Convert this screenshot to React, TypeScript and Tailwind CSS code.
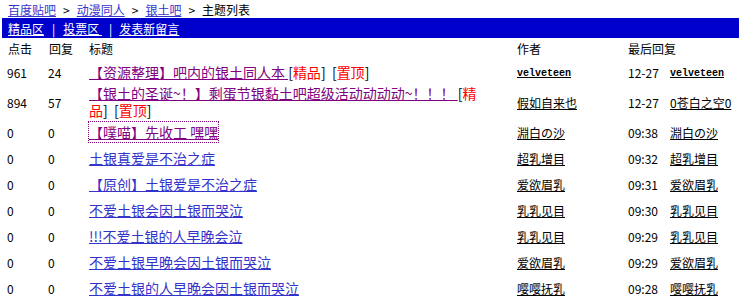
import React from "react";

type Row = {
  clicks: string;
  replies: string;
  title: React.ReactNode;
  author: string;
  time: string;
  last: string;
  latinAuthor?: boolean;
};

const Tag = ({ t }: { t: string }) => (
  <>
    <span className="text-black">[</span>
    <a className="text-[#ff0000] no-underline">{t}</a>
    <span className="text-black">]</span>
  </>
);

const rows: Row[] = [
  {
    clicks: "961",
    replies: "24",
    title: (
      <>
        <a className="text-[#800080] underline">【资源整理】吧内的银土同人本&nbsp;</a>
        <Tag t="精品" />&nbsp; <Tag t="置顶" />
      </>
    ),
    author: "velveteen",
    time: "12-27",
    last: "velveteen",
    latinAuthor: true,
  },
  {
    clicks: "894",
    replies: "57",
    title: (
      <>
        <a className="text-[#800080] underline">【银土的圣诞~！】剩蛋节银黏土吧超级活动动动动~！！！&nbsp;</a>
        <Tag t="精品" />&nbsp; <Tag t="置顶" />
      </>
    ),
    author: "假如自来也",
    time: "12-27",
    last: "0苍白之空0",
  },
  {
    clicks: "0",
    replies: "0",
    title: (
      <a className="text-[#800080] underline outline-1 outline-dotted outline-[#800080]">【噗喵】先收工 嘿嘿</a>
    ),
    author: "淵白の沙",
    time: "09:38",
    last: "淵白の沙",
  },
  { clicks: "0", replies: "0", title: <a className="text-[#3333cc] underline">土银真爱是不治之症</a>, author: "超乳增目", time: "09:32", last: "超乳增目" },
  { clicks: "0", replies: "0", title: <a className="text-[#3333cc] underline">【原创】土银爱是不治之症</a>, author: "爱欲眉乳", time: "09:31", last: "爱欲眉乳" },
  { clicks: "0", replies: "0", title: <a className="text-[#3333cc] underline">不爱土银会因土银而哭泣</a>, author: "乳乳见目", time: "09:30", last: "乳乳见目" },
  { clicks: "0", replies: "0", title: <a className="text-[#3333cc] underline">!!!不爱土银的人早晚会泣</a>, author: "乳乳见目", time: "09:29", last: "乳乳见目" },
  { clicks: "0", replies: "0", title: <a className="text-[#3333cc] underline">不爱土银早晚会因土银而哭泣</a>, author: "爱欲眉乳", time: "09:29", last: "爱欲眉乳" },
  { clicks: "0", replies: "0", title: <a className="text-[#3333cc] underline">不爱土银的人早晚会因土银而哭泣</a>, author: "嘤嘤抚乳", time: "09:28", last: "嘤嘤抚乳" },
];

const mono = { fontFamily: '"Liberation Mono", monospace', fontSize: "10px", fontWeight: 700 } as const;

export default function App() {
  return (
    <div
      className="w-[739px] h-[302px] overflow-hidden bg-white text-black text-[12px] leading-[17px]"
      style={{ fontFamily: '"Noto Sans CJK SC", "Noto Sans", sans-serif' }}
    >
      <div className="h-[18px] flex items-center pl-[8px]">
        <a className="text-[#3333cc] underline">百度贴吧</a>
        <span className="mx-[7px]">&gt;</span>
        <a className="text-[#3333cc] underline">动漫同人</a>
        <span className="mx-[7px]">&gt;</span>
        <a className="text-[#3333cc] underline">银土吧</a>
        <span className="mx-[7px]">&gt;</span>
        <span>主题列表</span>
      </div>
      <div className="ml-[2px] h-[20px] bg-[#0000cc] flex items-center pl-[6px] text-white">
        <a className="underline">精品区</a>
        <span className="mx-[8px]">|</span>
        <a className="underline">投票区&nbsp;</a>
        <span className="mx-[7px]">|</span>
        <a className="underline">发表新留言</a>
      </div>
      <div className="h-[21px] flex items-center">
        <div className="w-[49px] pl-[8px]">点击</div>
        <div className="w-[40px]">回复</div>
        <div className="w-[428px]">标题</div>
        <div className="w-[111px]">作者</div>
        <div>最后回复</div>
      </div>
      {rows.map((r, i) => (
        <div key={i} className="min-h-[26px] flex items-center">
          <div className="w-[48px] shrink-0 pl-[7px]">{r.clicks}</div>
          <div className="w-[41px] shrink-0">{r.replies}</div>
          <div className="w-[428px] shrink-0 pr-[28px] text-[14px]">{r.title}</div>
          <div className="w-[111px] shrink-0">
            <a className="underline" style={r.latinAuthor ? mono : undefined}>
              {r.author}
            </a>
          </div>
          <div className="w-[42px] shrink-0">{r.time}</div>
          <div className="shrink-0">
            <a className="underline" style={r.latinAuthor ? mono : undefined}>
              {r.last}
            </a>
          </div>
        </div>
      ))}
    </div>
  );
}
